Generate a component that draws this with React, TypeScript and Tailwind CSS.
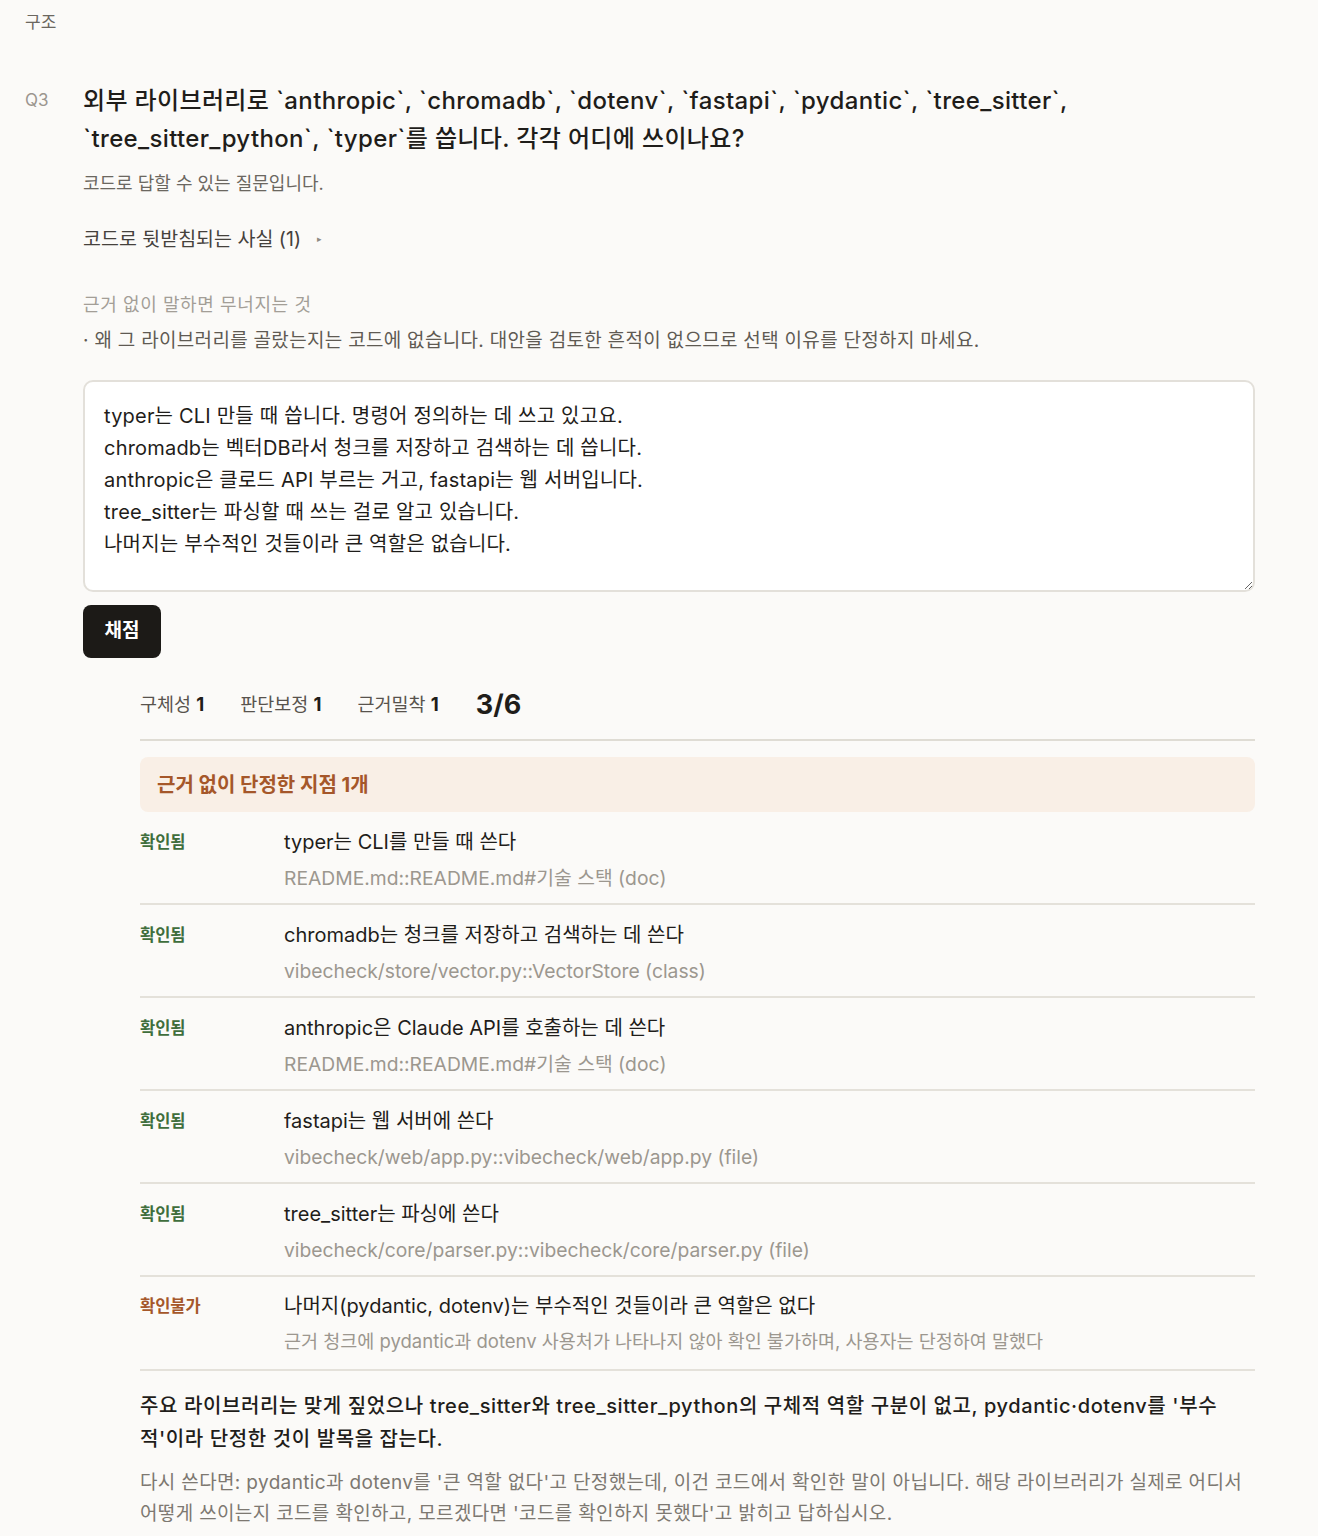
import React from 'react';

type Claim = {
  status: 'ok' | 'unknown';
  title: string;
  source: string;
};

const claims: Claim[] = [
  { status: 'ok', title: 'typer는 CLI를 만들 때 쓴다', source: 'README.md::README.md#기술 스택 (doc)' },
  { status: 'ok', title: 'chromadb는 청크를 저장하고 검색하는 데 쓴다', source: 'vibecheck/store/vector.py::VectorStore (class)' },
  { status: 'ok', title: 'anthropic은 Claude API를 호출하는 데 쓴다', source: 'README.md::README.md#기술 스택 (doc)' },
  { status: 'ok', title: 'fastapi는 웹 서버에 쓴다', source: 'vibecheck/web/app.py::vibecheck/web/app.py (file)' },
  { status: 'ok', title: 'tree_sitter는 파싱에 쓴다', source: 'vibecheck/core/parser.py::vibecheck/core/parser.py (file)' },
  {
    status: 'unknown',
    title: '나머지(pydantic, dotenv)는 부수적인 것들이라 큰 역할은 없다',
    source: '근거 청크에 pydantic과 dotenv 사용처가 나타나지 않아 확인 불가하며, 사용자는 단정하여 말했다',
  },
];

const answer = `typer는 CLI 만들 때 씁니다. 명령어 정의하는 데 쓰고 있고요.
chromadb는 벡터DB라서 청크를 저장하고 검색하는 데 씁니다.
anthropic은 클로드 API 부르는 거고, fastapi는 웹 서버입니다.
tree_sitter는 파싱할 때 쓰는 걸로 알고 있습니다.
나머지는 부수적인 것들이라 큰 역할은 없습니다.`;

export default function App() {
  return (
    <div
      className="min-h-screen bg-[#fbfaf8] text-[#1f1d1a]"
      style={{ fontFamily: '"Inter", "Noto Sans CJK KR", sans-serif' }}
    >
      <div className="pl-[25px] pr-[63px] pt-[10px] pb-8">
        <div className="text-[17px] text-[#6b6760] leading-6">구조</div>

        <div className="mt-[48px] flex">
          <div className="w-[58px] shrink-0 pt-[6px] text-[17px] text-[#9b968f]">Q3</div>
          <div className="flex-1 min-w-0">
            <h2 className="text-[24px] font-medium leading-[38px] tracking-[0.35px]">
              외부 라이브러리로 `anthropic`, `chromadb`, `dotenv`, `fastapi`, `pydantic`, `tree_sitter`,
              <br />
              `tree_sitter_python`, `typer`를 씁니다. 각각 어디에 쓰이나요?
            </h2>
            <p className="mt-[14px] text-[18px] text-[#6b6760] leading-6">코드로 답할 수 있는 질문입니다.</p>

            <button className="mt-[29px] flex items-center gap-[16px] text-[19.5px] text-[#45413c] leading-7">
              <span>코드로 뒷받침되는 사실 (1)</span>
              <span className="text-[9px] text-[#8f8a83]">▸</span>
            </button>

            <div className="mt-[40px] text-[18px] tracking-[0.6px] text-[#a39e97] leading-6">
              근거 없이 말하면 무너지는 것
            </div>
            <div className="mt-[12px] text-[19px] tracking-[0.3px] text-[#5f5a53] leading-6">
              · 왜 그 라이브러리를 골랐는지는 코드에 없습니다. 대안을 검토한 흔적이 없으므로 선택 이유를 단정하지 마세요.
            </div>

            <textarea
              className="mt-[27px] block w-full h-[212px] rounded-[10px] border-2 border-[#e3e0da] bg-white px-[19px] py-[18px] text-[20px] tracking-[0.2px] leading-[32px] text-[#1f1d1a] resize-y outline-none"
              defaultValue={answer}
            />

            <button className="mt-[13px] h-[53px] w-[78px] rounded-[8px] bg-[#1c1a17] text-[19px] font-bold text-white">
              채점
            </button>

            <div className="pl-[57px] mt-[24px]">
              <div className="flex items-center h-[46px] text-[18.5px] text-[#58534d]">
                <span className="mr-[36px]">
                  구체성 <b className="text-[#1f1d1a]">1</b>
                </span>
                <span className="mr-[36px]">
                  판단보정 <b className="text-[#1f1d1a]">1</b>
                </span>
                <span className="mr-[37px]">
                  근거밀착 <b className="text-[#1f1d1a]">1</b>
                </span>
                <span className="text-[27px] font-bold text-[#1f1d1a]">3/6</span>
              </div>
              <div className="mt-[11px] h-[2px] bg-[#dfdcd4]" />

              <div className="mt-[16px] h-[55px] rounded-[8px] bg-[#f9efe6] px-[17px] flex items-center text-[20px] font-bold text-[#a5572a]">
                근거 없이 단정한 지점 1개
              </div>

              <div>
                {claims.map((c, i) => (
                  <div
                    key={i}
                    className={
                      c.status === 'ok'
                        ? 'flex border-b-2 border-[#e4e1da] pt-[16px] pb-[13px]'
                        : 'flex border-b-2 border-[#e4e1da] pt-[15px] pb-[16px]'
                    }
                  >
                    <div
                      className={
                        c.status === 'ok'
                          ? 'w-[144px] shrink-0 pt-[2px] text-[16.5px] font-semibold text-[#3f6e3c] leading-6'
                          : 'w-[144px] shrink-0 pt-[2px] text-[16.5px] font-semibold text-[#a5572a] leading-6'
                      }
                    >
                      {c.status === 'ok' ? '확인됨' : '확인불가'}
                    </div>
                    <div className="flex-1 min-w-0">
                      <div className="text-[20px] text-[#1f1d1a] leading-7">{c.title}</div>
                      <div
                        className={
                          c.status === 'ok'
                            ? 'mt-[10px] text-[19.3px] text-[#9c978f] leading-6'
                            : 'mt-[9px] text-[18.5px] text-[#9c978f] leading-6'
                        }
                      >
                        {c.source}
                      </div>
                    </div>
                  </div>
                ))}
              </div>

              <p className="mt-[19px] text-[20px] font-medium tracking-[0.6px] leading-[33px] text-[#1f1d1a]">
                주요 라이브러리는 맞게 짚었으나 tree_sitter와 tree_sitter_python의 구체적 역할 구분이 없고, pydantic·dotenv를 '부수
                <br />
                적'이라 단정한 것이 발목을 잡는다.
              </p>
              <p className="mt-[11px] text-[19px] tracking-[0.35px] leading-[31px] text-[#7d7871]">
                다시 쓴다면: pydantic과 dotenv를 '큰 역할 없다'고 단정했는데, 이건 코드에서 확인한 말이 아닙니다. 해당 라이브러리가 실제로 어디서 어떻게 쓰이는지 코드를 확인하고, 모르겠다면 '코드를 확인하지 못했다'고 밝히고 답하십시오.
              </p>
            </div>
          </div>
        </div>
      </div>
    </div>
  );
}
